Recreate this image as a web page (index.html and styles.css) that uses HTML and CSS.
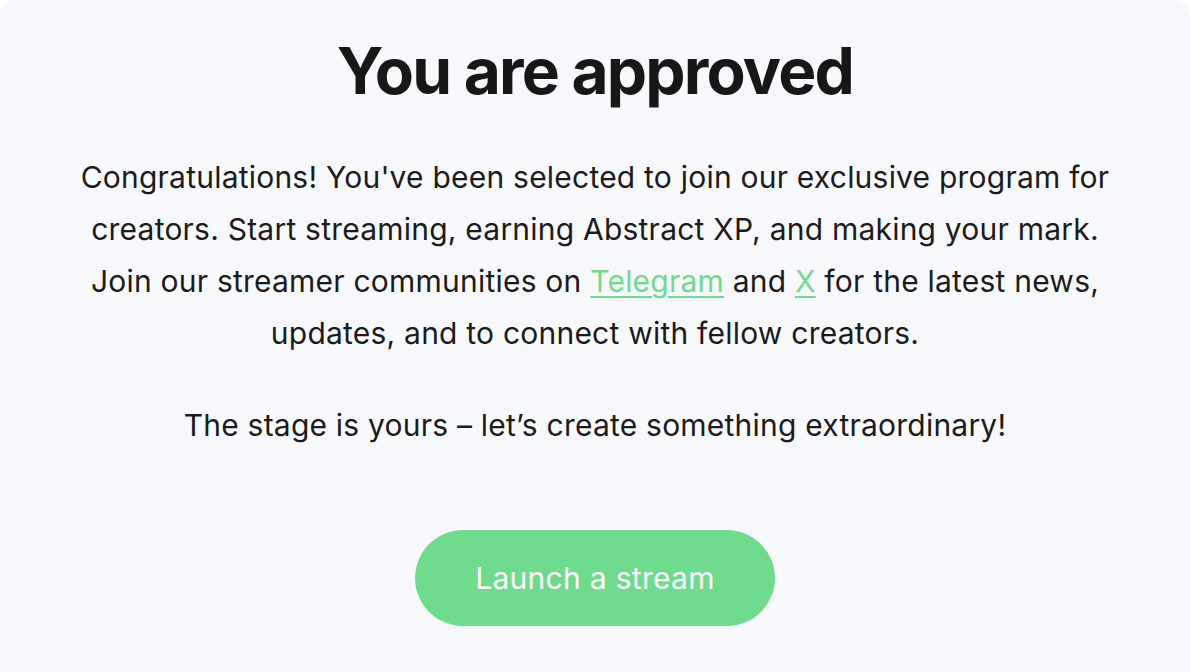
FILE: index.html
```html
<!DOCTYPE html>
<html>
<head>
<meta charset="UTF-8">
<title>You are approved</title>
<link rel="stylesheet" href="styles.css">
</head>
<body>
<div class="card">
	<h1 class="title">You are approved</h1>
	<p class="intro">
		Congratulations! You've been selected to join our exclusive program for creators. Start streaming, earning Abstract XP, and making your mark. Join our streamer communities on <a href="#">Telegram</a> and <a href="#">X</a> for the latest news, updates, and to connect with fellow creators.
	</p>
	<p class="outro">The stage is yours – let’s create something extraordinary!</p>
	<a class="btn" href="#">Launch a stream</a>
</div>
</body>
</html>
```
FILE: styles.css
```css
html,body{margin:0;padding:0;}
body{
	background:#fff;
	font-family:Inter,"Noto Sans",sans-serif;
	color:#1b1b1b;
}
.card{
	box-sizing:border-box;
	min-height:100vh;
	padding-top:33px;
	background:#f8f9fc;
	border-radius:16px 16px 0 0;
	text-align:center;
}
.title{
	margin:0;
	font-size:64px;
	line-height:76px;
	font-weight:700;
	letter-spacing:-1.8px;
	color:#171717;
}
.intro,.outro{
	margin:0 auto;
	font-size:30px;
	line-height:52px;
	letter-spacing:0.22px;
}
.intro{
	max-width:1050px;
	margin-top:42px;
}
.outro{
	margin-top:40px;
}
.intro a{
	color:#6edc8c;
	text-decoration:underline;
	text-decoration-thickness:2px;
	text-underline-offset:4px;
}
.btn{
	display:inline-flex;
	align-items:center;
	justify-content:center;
	width:360px;
	height:96px;
	margin-top:79px;
	border-radius:48px;
	background:#6edc8c;
	color:#fff;
	font-size:30px;
	letter-spacing:0.3px;
	text-decoration:none;
}
```
